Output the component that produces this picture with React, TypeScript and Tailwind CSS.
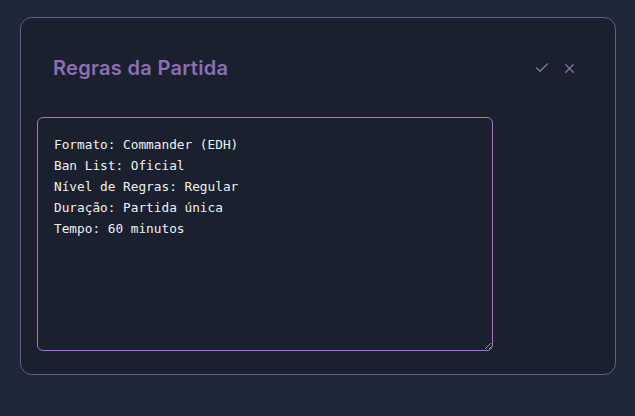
import { useEffect, useRef } from "react";

const rules = "Formato: Commander (EDH)\nBan List: Oficial\nNível de Regras: Regular\nDuração: Partida única\nTempo: 60 minutos";

export default function App() {
  const ref = useRef<HTMLTextAreaElement>(null);

  useEffect(() => {
    const el = ref.current;
    if (el) {
      el.focus();
      el.setSelectionRange(rules.length, rules.length);
    }
  }, []);

  return (
    <main className="min-h-screen bg-[#1f2839] px-5 pt-[17px]">
      <section className="w-[596px] h-[358px] rounded-xl border border-[#6b5a8c] bg-[#1a202e] p-4">
        <div className="flex h-[68px] items-center justify-between pl-4 pr-[22px]">
          <h2 className="text-[20px] font-semibold tracking-[0.015em] text-[#8c6fb3]" style={{ fontFamily: "Inter, sans-serif" }}>
            Regras da Partida
          </h2>
          <div className="flex items-center gap-[12px] text-[#8c6fb3]">
            <svg width="16" height="16" viewBox="0 0 24 24" fill="none" stroke="currentColor" strokeWidth="2" strokeLinecap="round" strokeLinejoin="round">
              <path d="M20 6 9 17l-5-5" />
            </svg>
            <svg width="15" height="15" viewBox="0 0 24 24" fill="none" stroke="currentColor" strokeWidth="2" strokeLinecap="round" strokeLinejoin="round">
              <path d="M18 6 6 18M6 6l12 12" />
            </svg>
          </div>
        </div>
        <textarea
          ref={ref}
          className="mt-[15px] block w-[456px] h-[234px] rounded-md border border-[#9b7cc4] bg-[#1a202e] p-4 text-[12.75px] leading-[21px] text-[#f1f1f1] caret-white outline-none"
          style={{ fontFamily: '"DejaVu Sans Mono", monospace' }}
          defaultValue={rules}
        />
      </section>
    </main>
  );
}
